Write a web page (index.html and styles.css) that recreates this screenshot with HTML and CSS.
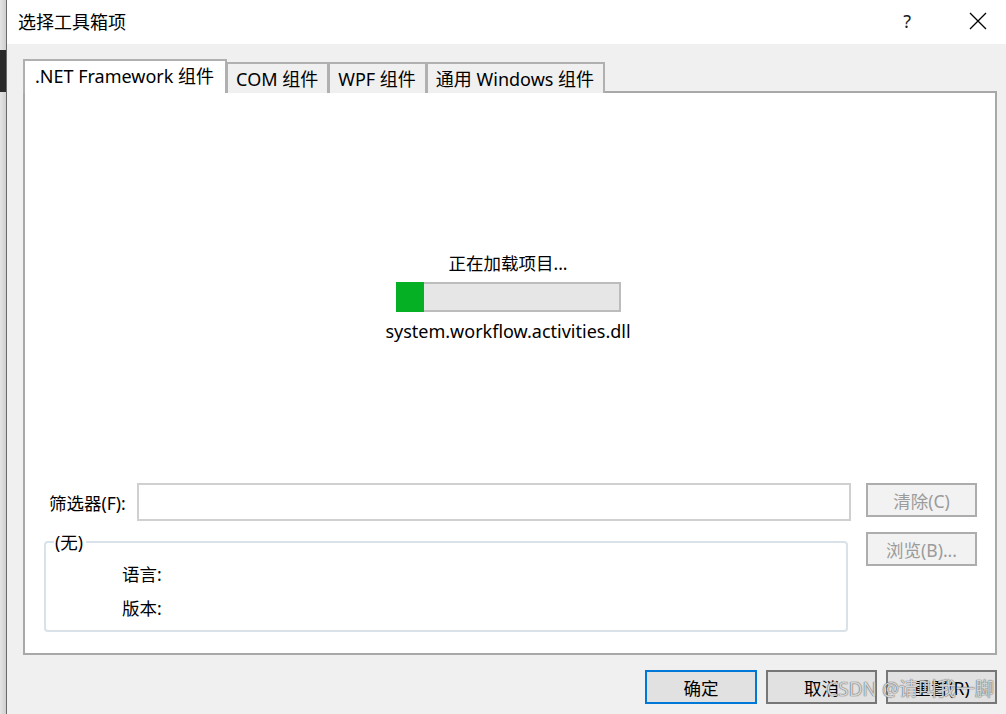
FILE: index.html
```html
<!DOCTYPE html>
<html lang="zh-CN">
<head>
<meta charset="utf-8">
<title>选择工具箱项</title>
<link rel="stylesheet" href="styles.css">
</head>
<body>
<div class="backdrop"><div class="backdrop-dark"></div></div>
<div class="dialog">
  <div class="titlebar">
    <span class="title">选择工具箱项</span>
    <span class="help">?</span>
    <span class="close">
      <svg width="18" height="18" viewBox="0 0 18 18"><path d="M1 1 L17 17 M17 1 L1 17" stroke="#000" stroke-width="1.3" fill="none"/></svg>
    </span>
  </div>
  <div class="body">
    <div class="tabs">
      <div class="tab active">.NET Framework 组件</div>
      <div class="tab">COM 组件</div>
      <div class="tab">WPF 组件</div>
      <div class="tab">通用 Windows 组件</div>
    </div>
    <div class="panel">
      <div class="loading">
        <div class="loading-text">正在加载项目...</div>
        <div class="progress"><div class="progress-fill" style="width: 13%"></div></div>
        <div class="loading-file">system.workflow.activities.dll</div>
      </div>
      <div class="lower">
        <div class="lower-left">
          <div class="filter-row">
            <label class="filter-label">筛选器(F):</label>
            <div class="filter-input"></div>
          </div>
          <fieldset class="group">
            <legend class="group-legend">(无)</legend>
            <div class="group-row">语言:</div>
            <div class="group-row">版本:</div>
          </fieldset>
        </div>
        <div class="lower-right">
          <button class="btn btn-disabled">清除(C)</button>
          <button class="btn btn-disabled">浏览(B)...</button>
        </div>
      </div>
    </div>
    <div class="footer">
      <button class="btn btn-footer btn-default">确定</button>
      <button class="btn btn-footer">取消</button>
      <button class="btn btn-footer">重置(R)</button>
    </div>
    <div class="watermark">CSDN @请叫我一脚</div>
  </div>
</div>
</body>
</html>
```
FILE: styles.css
```css
html, body {
  margin: 0;
  padding: 0;
  height: 100%;
}
body {
  display: flex;
  width: 1006px;
  height: 714px;
  overflow: hidden;
  font-family: "Noto Sans", "Noto Sans CJK SC", sans-serif;
  font-size: 18px;
  color: #000;
  background: #f0f0f0;
}
.backdrop {
  width: 6px;
  flex: none;
  background: linear-gradient(to right, #e4e4e4, #cfcfcf);
  border-right: 1px solid #6a6a6a;
  position: relative;
}
.backdrop-dark {
  position: absolute;
  left: 0;
  top: 50px;
  width: 6px;
  height: 42px;
  background: #2a2a2a;
}
.dialog {
  flex: 1;
  display: flex;
  flex-direction: column;
  position: relative;
}
.titlebar {
  height: 44px;
  background: #fff;
  display: flex;
  align-items: center;
  flex: none;
}
.title {
  margin-left: 11px;
  font-size: 18px;
  font-family: "Noto Sans CJK SC", sans-serif;
  margin-top: -2px;
}
.help {
  margin-left: auto;
  font-size: 18px;
  color: #222;
  margin-right: 58px;
  margin-top: -2px;
}
.close {
  margin-right: 19px;
  display: flex;
  margin-top: -2px;
}
.body {
  flex: 1;
  background: #f0f0f0;
  padding: 15px 9px 0 16px;
  display: flex;
  flex-direction: column;
}
.tabs {
  display: flex;
  align-items: flex-end;
  height: 34px;
  position: relative;
  z-index: 1;
  margin-bottom: -2px;
}
.tab {
  box-sizing: border-box;
  height: 31px;
  padding: 1px 9px 0 8px;
  border: 2px solid #b0b0b0;
  border-bottom: none;
  border-left-width: 1px;
  background: #f0f0f0;
  display: flex;
  align-items: center;
  white-space: nowrap;
  font-size: 18px;
  line-height: 1;
}
.tab.active {
  height: 34px;
  background: #fff;
  border-left-width: 2px;
  padding: 0 11px 2px 10px;
}
.panel {
  box-sizing: border-box;
  height: 564px;
  background: #fff;
  border: 2px solid #a8a8a8;
  display: flex;
  flex-direction: column;
}
.loading {
  display: flex;
  flex-direction: column;
  align-items: center;
  margin-top: 158px;
  padding-right: 4px;
}
.loading-text {
  height: 24px;
  line-height: 24px;
  font-size: 17.5px;
}
.progress {
  margin-top: 7px;
  box-sizing: border-box;
  width: 225px;
  height: 30px;
  background: #e6e6e6;
  border: 2px solid #bcbcbc;
  border-left: none;
  display: flex;
}
.progress-fill {
  background: #06b025;
  height: 30px;
  margin-top: -2px;
}
.loading-file {
  margin-top: 7px;
  height: 24px;
  line-height: 24px;
  font-size: 18px;
}
.lower {
  display: flex;
  margin-top: 140px;
  padding-left: 19px;
}
.lower-left {
  width: 807px;
  display: flex;
  flex-direction: column;
}
.filter-row {
  display: flex;
  align-items: center;
  height: 38px;
}
.filter-label {
  margin-left: 5px;
  width: 88px;
  font-size: 17.5px;
}
.filter-input {
  flex: 1;
  box-sizing: border-box;
  height: 38px;
  border: 2px solid #d0d0d0;
  background: #fff;
}
.group {
  margin: 10px 0 0 0;
  padding: 4px 0 0 0;
  min-width: 0;
  height: 101px;
  box-sizing: border-box;
  border: 2px solid #d9e2e8;
  border-radius: 4px;
  width: 804px;
}
.group-legend {
  padding: 0 3px 0 1px;
  margin-left: 8px;
  font-size: 17.5px;
  line-height: 22px;
}
.group-row {
  height: 34px;
  line-height: 34px;
  font-size: 17.5px;
  padding-left: 76px;
}
.lower-right {
  margin-left: 15px;
  display: flex;
  flex-direction: column;
  gap: 15px;
}
.btn {
  box-sizing: border-box;
  width: 111px;
  height: 34px;
  margin: 0;
  padding: 0;
  font-family: "Noto Sans", "Noto Sans CJK SC", sans-serif;
  font-size: 17.5px;
  border: 2px solid #adadad;
  background: #f1f1f1;
  color: #000;
}
.btn-disabled {
  color: #9b9b9b;
  background: #f2f2f2;
}
.footer {
  display: flex;
  justify-content: flex-end;
  gap: 9px;
  margin-top: 15px;
}
.btn-footer {
  height: 34px;
  background: #e1e1e1;
  border-color: #777;
}
.btn-default {
  width: 112px;
  border-color: #0078d7;
}
.watermark {
  position: absolute;
  right: 12px;
  bottom: 12px;
  font-size: 19px;
  color: rgba(255, 255, 255, 0.75);
  text-shadow: 0 0 1px rgba(80, 80, 80, 0.9), 0 0 1px rgba(80, 80, 80, 0.9);
  pointer-events: none;
}
```
